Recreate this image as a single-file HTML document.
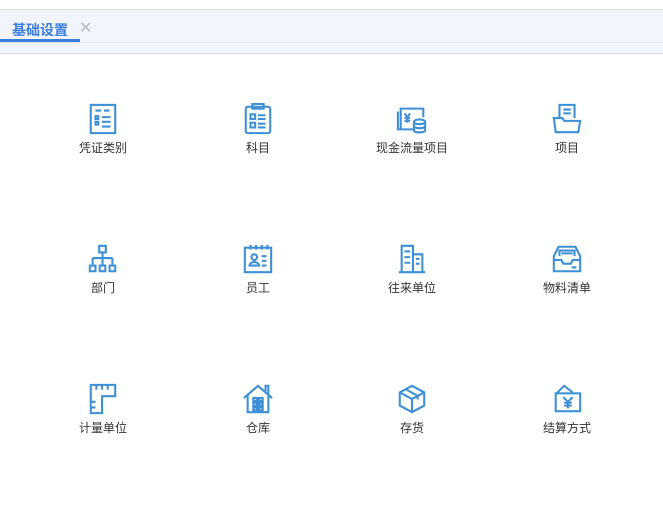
<html><head><style>
body{margin:0;width:663px;height:513px;background:#fff;font-family:"Liberation Sans","Noto Sans CJK SC",sans-serif;position:relative;overflow:hidden}
.top{position:absolute;left:0;top:9px;width:663px;height:43px;background:#f2f5fd;border-top:1px solid #dcdfe6;border-bottom:1px solid #dcdfe6}
.tab{position:absolute;left:12px;top:10px;font-size:14px;font-weight:bold;color:#3a7fe0}
.x{position:absolute;left:79px;top:8px;font-size:16px;color:#b8bcc4}
.ul{position:absolute;left:0;top:29px;width:80px;height:3px;background:#3a7fe0}
.ln{position:absolute;left:0;top:32px;width:663px;height:1px;background:#e2e6ee}
.it{position:absolute;width:120px;text-align:center;font-size:12px;color:#333}
.it svg{display:block;margin:0 auto 4px;width:32px;height:32px}
svg *{fill:none;stroke:#3d8fd6;stroke-width:2.2}
</style></head><body>
<div class="top"><div class="tab">基础设置</div><div class="x">✕</div><div class="ul"></div><div class="ln"></div></div>

<div class="it" style="left:43px;top:103px"><svg viewBox="0 0 34 34"><rect x="4" y="2" width="26" height="30"/><path d="M9 8h6M18 8h6M9 14h3v3H9zM9 20h3v3H9zM16 15h9M16 20h9M16 25h9" stroke-width="1.5"/></svg>凭证类别</div>
<div class="it" style="left:198px;top:103px"><svg viewBox="0 0 34 34"><rect x="4" y="4" width="26" height="28" rx="2"/><rect x="11" y="1" width="12" height="5"/><path d="M9 12h5v5H9zM9 21h5v5H9zM17 13h8M17 17h8M17 22h8M17 26h8" stroke-width="1.7"/></svg>科目</div>
<div class="it" style="left:352px;top:103px"><svg viewBox="0 0 34 34"><path d="M5 28V6h24v9M2 9v19h17"/><path d="M9 11l3 4 3-4M12 15v6M9 16h6M9 19h6" stroke-width="1.6"/><ellipse cx="25" cy="20" rx="6" ry="2.5"/><path d="M19 20v9c0 3 12 3 12 0v-9M19 24.5c0 3 12 3 12 0"/></svg>现金流量项目</div>
<div class="it" style="left:507px;top:103px"><svg viewBox="0 0 34 34"><path d="M9 16V2h16v14M13 7h8M13 11h8"/><path d="M3 16h9l2 3h17l-2 12H5z"/></svg>项目</div>

<div class="it" style="left:43px;top:243px"><svg viewBox="0 0 34 34"><rect x="13" y="3" width="7" height="7"/><path d="M16.5 10v6M6 16h21M6 16v8M16.5 16v8M27 16v8"/><rect x="3" y="24" width="6" height="6"/><rect x="13.5" y="24" width="6" height="6"/><rect x="24" y="24" width="6" height="6"/></svg>部门</div>
<div class="it" style="left:198px;top:243px"><svg viewBox="0 0 34 34"><rect x="3" y="5" width="28" height="26"/><path d="M9 2v5M15 2v5M21 2v5M27 2v5"/><circle cx="13" cy="15" r="3"/><path d="M8 24c0-5 10-5 10 0zM21 14h5M21 19h5M21 24h5" stroke-width="1.7"/></svg>员工</div>
<div class="it" style="left:352px;top:243px"><svg viewBox="0 0 34 34"><path d="M6 31V3h12v28M18 12h10v19M3 31h28M9 9h6M9 15h6M9 21h6M21 17h4M21 22h4" stroke-width="2"/></svg>往来单位</div>
<div class="it" style="left:507px;top:243px"><svg viewBox="0 0 34 34"><path d="M3 14L8 4h18l5 10v16H3zM3 18h8l2 4h8l2-4h8"/><path d="M9 14V8h16v6M11 11h12M22 26h5" stroke-width="1.8"/></svg>物料清单</div>

<div class="it" style="left:43px;top:383px"><svg viewBox="0 0 34 34"><path d="M4 2h26v12H16v18H4zM10 2v5M16 2v5M22 2v5M4 20h5M4 26h5" stroke-width="2"/></svg>计量单位</div>
<div class="it" style="left:198px;top:383px"><svg viewBox="0 0 34 34"><path d="M2 16L17 3l15 13M6 13v18h22V13M25 9V3h3v9"/><path d="M12 16h4v3h-4zM18 16h4v3h-4zM12 21h4v3h-4zM18 21h4v3h-4zM12 26h4v3h-4zM18 26h4v3h-4z" stroke-width="1.4"/></svg>仓库</div>
<div class="it" style="left:352px;top:383px"><svg viewBox="0 0 34 34"><path d="M17 3l13 7v14l-13 7-13-7V10zM4 10l13 7 13-7M17 17v14M10 6.5l13 7v4"/></svg>存货</div>
<div class="it" style="left:507px;top:383px"><svg viewBox="0 0 34 34"><path d="M5 12l9-9 9 7"/><rect x="5" y="11" width="26" height="19"/><path d="M13 15l5 5 5-5M18 20v7M14 21h8M14 24h8" stroke-width="1.8"/></svg>结算方式</div>
</body></html>
